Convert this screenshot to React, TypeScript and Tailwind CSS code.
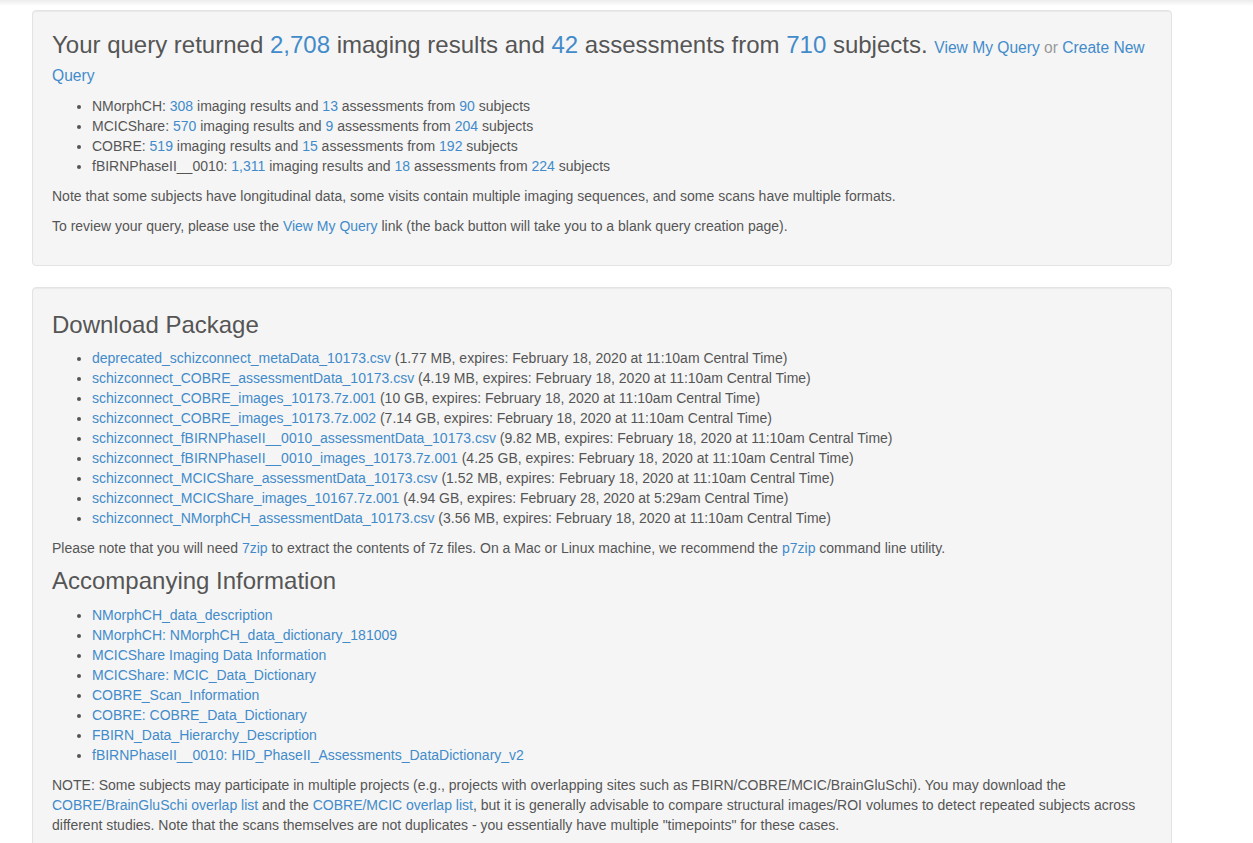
import React from "react";

const A = ({ children }: { children: React.ReactNode }) => (
  <a href="#" className="text-[#428bca] no-underline">
    {children}
  </a>
);

const downloads: [string, string][] = [
  ["deprecated_schizconnect_metaData_10173.csv", "(1.77 MB, expires: February 18, 2020 at 11:10am Central Time)"],
  ["schizconnect_COBRE_assessmentData_10173.csv", "(4.19 MB, expires: February 18, 2020 at 11:10am Central Time)"],
  ["schizconnect_COBRE_images_10173.7z.001", "(10 GB, expires: February 18, 2020 at 11:10am Central Time)"],
  ["schizconnect_COBRE_images_10173.7z.002", "(7.14 GB, expires: February 18, 2020 at 11:10am Central Time)"],
  ["schizconnect_fBIRNPhaseII__0010_assessmentData_10173.csv", "(9.82 MB, expires: February 18, 2020 at 11:10am Central Time)"],
  ["schizconnect_fBIRNPhaseII__0010_images_10173.7z.001", "(4.25 GB, expires: February 18, 2020 at 11:10am Central Time)"],
  ["schizconnect_MCICShare_assessmentData_10173.csv", "(1.52 MB, expires: February 18, 2020 at 11:10am Central Time)"],
  ["schizconnect_MCICShare_images_10167.7z.001", "(4.94 GB, expires: February 28, 2020 at 5:29am Central Time)"],
  ["schizconnect_NMorphCH_assessmentData_10173.csv", "(3.56 MB, expires: February 18, 2020 at 11:10am Central Time)"],
];

const info = [
  "NMorphCH_data_description",
  "NMorphCH: NMorphCH_data_dictionary_181009",
  "MCICShare Imaging Data Information",
  "MCICShare: MCIC_Data_Dictionary",
  "COBRE_Scan_Information",
  "COBRE: COBRE_Data_Dictionary",
  "FBIRN_Data_Hierarchy_Description",
  "fBIRNPhaseII__0010: HID_PhaseII_Assessments_DataDictionary_v2",
];

const sites: [string, string, string, string][] = [
  ["NMorphCH", "308", "13", "90"],
  ["MCICShare", "570", "9", "204"],
  ["COBRE", "519", "15", "192"],
  ["fBIRNPhaseII__0010", "1,311", "18", "224"],
];

const wellCls =
  "w-[1140px] ml-[32px] bg-[#f5f5f5] border border-[#e3e3e3] rounded-[4px] p-[19px] shadow-[inset_0_1px_1px_rgba(0,0,0,0.05)]";

export default function App() {
  return (
    <div
      className="min-h-[843px] bg-white text-[#555] text-[14px] leading-[20px]"
      style={{ fontFamily: '"Liberation Sans", Arial, Helvetica, sans-serif' }}
    >
      <div className="h-[6px] bg-gradient-to-b from-[#ececec] to-white" />
      <div className={wellCls + " mt-[4px]"}>
        <h3 className="text-[24px] leading-[26.4px] font-normal mt-[2px] mb-[8px] text-[#555]">
          Your query returned <span className="text-[#428bca]">2,708</span> imaging results and{" "}
          <span className="text-[#428bca]">42</span> assessments from{" "}
          <span className="text-[#428bca]">710</span> subjects.{" "}
          <small className="text-[15.6px] leading-[25px] text-[#999]">
            <A>View My Query</A> or <A>Create New Query</A>
          </small>
        </h3>
        <ul className="list-disc pl-[40px] mb-[10px]">
          {sites.map(([n, i, a, s]) => (
            <li key={n}>
              {n}: <A>{i}</A> imaging results and <A>{a}</A> assessments from <A>{s}</A> subjects
            </li>
          ))}
        </ul>
        <p className="mb-[10px]">
          Note that some subjects have longitudinal data, some visits contain multiple imaging sequences, and some
          scans have multiple formats.
        </p>
        <p className="mb-[10px]">
          To review your query, please use the <A>View My Query</A> link (the back button will take you to a blank
          query creation page).
        </p>
      </div>

      <div className={wellCls + " mt-[21px]"}>
        <h3 className="text-[24px] leading-[26.4px] font-normal mt-[5px] mb-[10px] text-[#555]">Download Package</h3>
        <ul className="list-disc pl-[40px] mb-[10px]">
          {downloads.map(([f, d]) => (
            <li key={f}>
              <A>{f}</A> {d}
            </li>
          ))}
        </ul>
        <p className="mb-[10px]">
          Please note that you will need <A>7zip</A> to extract the contents of 7z files. On a Mac or Linux machine,
          we recommend the <A>p7zip</A> command line utility.
        </p>
        <h3 className="text-[24px] leading-[26.4px] font-normal mt-0 mb-[10px] text-[#555]">
          Accompanying Information
        </h3>
        <ul className="list-disc pl-[40px] mb-[10px]">
          {info.map((t) => (
            <li key={t}>
              <A>{t}</A>
            </li>
          ))}
        </ul>
        <p className="mb-[10px]">
          NOTE: Some subjects may participate in multiple projects (e.g., projects with overlapping sites such as
          FBIRN/COBRE/MCIC/BrainGluSchi). You may download the <A>COBRE/BrainGluSchi overlap list</A> and the{" "}
          <A>COBRE/MCIC overlap list</A>, but it is generally advisable to compare structural images/ROI volumes to
          detect repeated subjects across different studies. Note that the scans themselves are not duplicates - you
          essentially have multiple "timepoints" for these cases.
        </p>
      </div>
    </div>
  );
}
